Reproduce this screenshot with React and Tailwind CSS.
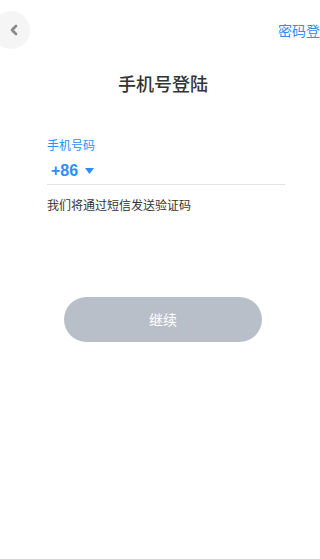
import { ChevronLeft } from 'lucide-react';

export default function App() {
  const font = { fontFamily: '"Noto Sans CJK SC", "Liberation Sans", sans-serif' };
  return (
    <div className="w-[320px] h-[559px] bg-white overflow-hidden relative" style={font}>
      {/* Header */}
      <div className="flex items-center justify-between h-[38px] mt-[11px] overflow-hidden">
        <button className="w-[38px] h-[38px] -ml-[8px] rounded-full bg-[#f5f5f5] flex items-center justify-center border-none">
          <ChevronLeft size={16} strokeWidth={4} color="#8a8a8a" className="ml-[6px]" />
        </button>
        <span className="text-[14px] text-[#2c8ef8] whitespace-nowrap -mr-[14px]">密码登录</span>
      </div>

      <h1 className="text-center text-[18px] font-medium text-[#333] mt-[21px] leading-[26px] pl-[6px]">手机号登陆</h1>

      {/* Phone field */}
      <div className="ml-[47px] mr-[35px] mt-[41px]">
        <p className="text-[12px] text-[#2c8ef8] leading-[16px]">手机号码</p>
        <div className="flex items-center gap-[7px] mt-[8px] pl-[4px] pb-[3px] border-b-[1.5px] border-[#e1e1e6]">
          <span className="text-[16px] font-bold text-[#2c8ef8] leading-[20px]" style={{ fontFamily: '"Liberation Sans", sans-serif' }}>+86</span>
          <svg width="9" height="6" viewBox="0 0 9 6"><path d="M0 0h9L4.5 6z" fill="#2c8ef8" /></svg>
        </div>
        <p className="text-[12px] text-[#333] mt-[12px] leading-[16px]">我们将通过短信发送验证码</p>
      </div>

      <div className="flex justify-center mt-[84px] pl-[6px]">
        <button className="w-[198px] h-[45px] rounded-full bg-[#b9bfc8] text-white text-[14px] border-none">继续</button>
      </div>
    </div>
  );
}
